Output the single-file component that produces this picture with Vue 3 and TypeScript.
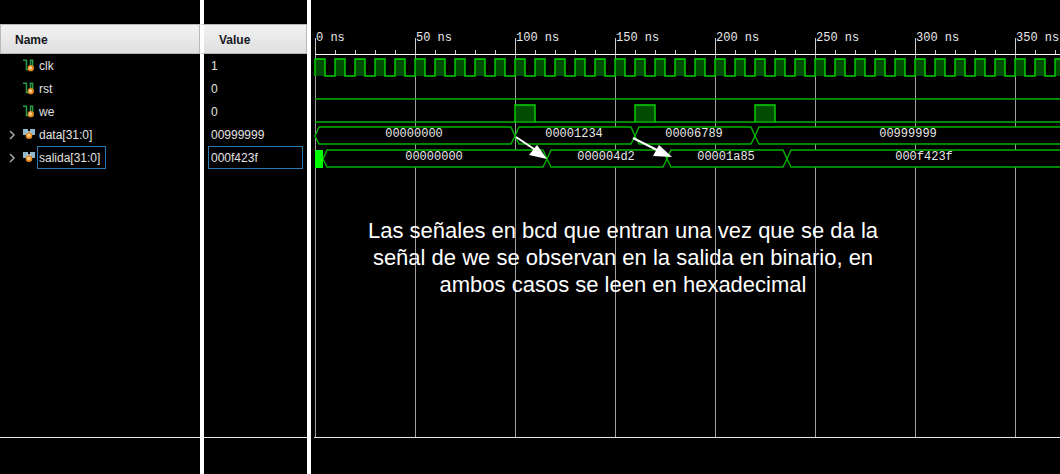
<script setup lang="ts">
import { computed, onBeforeUnmount, onMounted, ref } from 'vue'

interface Signal {
  name: string
  value: string
  bus: boolean
  selected?: boolean
}

interface Change {
  at: number
  text: string
}

const signals: Signal[] = [
  { name: 'clk', value: '1', bus: false },
  { name: 'rst', value: '0', bus: false },
  { name: 'we', value: '0', bus: false },
  { name: 'data[31:0]', value: '00999999', bus: true },
  { name: 'salida[31:0]', value: '000f423f', bus: true, selected: true },
]

// Horizontal positions are measured in pixels from the time origin, two per nanosecond.
const scale = 2
const origin = 4

const pane = ref<HTMLElement | null>(null)
const span = ref(745)
let observer: ResizeObserver | undefined

function measure(): void {
  if (pane.value) span.value = pane.value.clientWidth - origin
}

onMounted(() => {
  measure()
  observer = new ResizeObserver(measure)
  if (pane.value) observer.observe(pane.value)
})
onBeforeUnmount(() => observer?.disconnect())

function steps(ns: number): number[] {
  return Array.from({ length: Math.ceil(span.value / (ns * scale)) }, (_, i) => i * ns)
}

const majors = computed(() => steps(50))
const minors = computed(() => steps(10).filter((t) => t % 50 !== 0))
const clocks = computed(() => steps(10))
const pulses = [100, 160, 220]

const clockPath = computed(
  () => 'M0 76' + clocks.value.map((t) => `H${t * scale}V59H${t * scale + 10}V76`).join('') + `H${span.value}`,
)

const buses: { top: number; changes: Change[] }[] = [
  {
    top: 127,
    changes: [
      { at: 0, text: '00000000' },
      { at: 200, text: '00001234' },
      { at: 320, text: '00006789' },
      { at: 440, text: '00999999' },
    ],
  },
  {
    top: 150,
    changes: [
      { at: 8, text: '00000000' },
      { at: 232, text: '000004d2' },
      { at: 352, text: '00001a85' },
      { at: 472, text: '000f423f' },
    ],
  },
]

const traces = computed(() =>
  buses.map(({ top, changes }) => ({
    top,
    segments: changes.map((c, i) => {
      const next = changes[i + 1]
      const end = next ? next.at : span.value + 4
      const close = next
        ? `H${end - 4}L${end} ${top + 9}L${end - 4} ${top + 17}`
        : `H${end + 5}V${top + 17}`
      return {
        text: c.text,
        middle: Math.floor((c.at + end) / 2) - 1,
        d: `M${c.at} ${top + 9}L${c.at + 4} ${top}${close}H${c.at + 4}Z`,
      }
    }),
  })),
)
</script>

<template>
  <main class="viewer">
    <section class="signals">
      <table>
        <thead>
          <tr>
            <th class="name">Name</th>
            <th class="value">Value</th>
          </tr>
        </thead>
        <tbody>
          <tr v-for="s in signals" :key="s.name">
            <td class="name">
              <div class="entry">
                <button v-if="s.bus" type="button" class="expand" :aria-label="`Expand ${s.name}`">
                  <svg width="7" height="10" viewBox="0 0 7 10"><path d="M1 1L5 5L1 9" fill="none" stroke="#a8a8a8" stroke-width="1.5" /></svg>
                </button>
                <span v-else class="expand"></span>
                <svg v-if="s.bus" class="icon" width="12" height="13" viewBox="0 0 12 13">
                  <path d="M0 1H5V7H0ZM7 1H12V7H7Z" fill="#8fb8cc" />
                  <path d="M4 4H8" stroke="#c4d8e2" stroke-width="1.5" />
                  <circle cx="6" cy="7.8" r="3.3" fill="#e58a1f" />
                  <circle cx="5.8" cy="7.4" r="1.7" fill="#ffcf92" />
                </svg>
                <svg v-else class="icon" width="12" height="13" viewBox="0 0 12 13">
                  <path d="M0 1.2H3.5V10.5H7.5V1.2H9.6V8" fill="none" stroke="#2a9c48" stroke-width="1.5" />
                  <circle cx="7.8" cy="9.2" r="3.1" fill="#e58a1f" />
                  <circle cx="7.5" cy="8.9" r="1.6" fill="#ffcf92" />
                </svg>
                <span class="label" :class="{ selected: s.selected }">{{ s.name }}</span>
              </div>
            </td>
            <td class="value">
              <div class="reading" :class="{ selected: s.selected }">{{ s.value }}</div>
            </td>
          </tr>
        </tbody>
      </table>
    </section>

    <section ref="pane" class="wave">
      <svg class="plot" width="100%" height="100%" role="img" aria-label="Waveform">
        <svg :x="origin" y="0" width="100%" height="100%" overflow="visible">
          <g class="grid">
            <rect v-for="t in majors" :key="t" :x="t * scale" y="38" width="1" height="100%" />
          </g>
          <g class="ticks">
            <rect v-for="t in minors" :key="t" :x="t * scale" y="50" width="1" height="4" />
            <rect v-for="t in majors" :key="t" :x="t * scale" y="38" width="1" height="16" />
            <rect class="axis" x="0" y="54" width="100%" height="1" />
          </g>
          <g class="time">
            <text v-for="t in majors" :key="t" :x="t * scale + 1" y="41">{{ t }} ns</text>
          </g>

          <g class="pulse">
            <rect v-for="t in clocks" :key="t" :x="t * scale" y="59" width="10" height="17" />
            <rect v-for="t in pulses" :key="t" :x="t * scale" y="105" width="20" height="17" />
          </g>
          <path class="trace" :d="clockPath" />
          <path class="trace low" :d="`M0 99H${span}M0 122H${span}`" />
          <path v-for="t in pulses" :key="t" class="trace" :d="`M${t * scale} 122V105H${t * scale + 20}V122`" />

          <g v-for="b in traces" :key="b.top">
            <g v-for="s in b.segments" :key="s.text">
              <path class="bus" :d="s.d" />
              <text class="bits" :x="s.middle" :y="b.top + 10">{{ s.text }}</text>
            </g>
          </g>
          <rect x="0" y="150" width="8" height="18" fill="#00ff00" />

          <g class="arrows">
            <path d="M201 137L222 151" />
            <path d="M318 138L342 150" />
            <polygon points="232,159 214,155 222,145" />
            <polygon points="357,157 338,156 344,145" />
          </g>
        </svg>
      </svg>
      <p class="note">
        Las señales en bcd que entran una vez que se da la<br />
        señal de we se observan en la salida en binario, en<br />
        ambos casos se leen en hexadecimal
      </p>
    </section>
  </main>
</template>

<style>
body {
  margin: 0;
  background: #000;
}
</style>

<style scoped>
.viewer {
  display: grid;
  grid-template-columns: 311px 1fr;
  min-height: 100vh;
  box-sizing: border-box;
  background: #000;
  color: #e2e2e2;
  font: 12px/16px "Liberation Sans", Arial, sans-serif;
}

.signals {
  padding-top: 24px;
  background:
    linear-gradient(#fff, #fff) 200px 0 / 4px 100% no-repeat,
    linear-gradient(#fff, #fff) 307px 0 / 4px 100% no-repeat,
    linear-gradient(#e8e8e8, #e8e8e8) 0 calc(100% - 36px) / 100% 1px no-repeat;
}

table {
  width: 307px;
  table-layout: fixed;
  border-collapse: separate;
  border-spacing: 0;
}

th {
  box-sizing: border-box;
  height: 30px;
  padding: 2px 0 0 14px;
  border: 1px solid #b8b8b8;
  background: linear-gradient(#f2f2f2, #dfdfe1);
  color: #16161c;
  font-weight: bold;
  text-align: left;
}

th.name {
  width: 200px;
}

th.value {
  width: 107px;
  padding-left: 15px;
  border-left: 4px solid #fff;
}

td {
  height: 23px;
  padding: 0;
}

td.value {
  padding: 0 4px 0 8px;
}

.entry {
  display: flex;
  align-items: center;
  height: 23px;
  padding-left: 9px;
}

.expand {
  display: flex;
  width: 14px;
  padding: 0;
  border: 0;
  background: none;
}

.icon {
  margin-right: 2px;
}

.label,
.reading {
  box-sizing: border-box;
  height: 23px;
  padding: 3px 2px;
  border: 1px solid transparent;
}

.label {
  padding: 3px 5px 3px 1px;
}

.label.selected,
.reading.selected {
  border-color: #2d7ab0;
}

.wave {
  position: relative;
  overflow: hidden;
  margin-bottom: 36px;
  border-bottom: 1px solid #e8e8e8;
  clip-path: inset(0 0 0 3px);
}

.plot {
  position: absolute;
  inset: 0;
}

.grid rect {
  fill: #a0a0a0;
}

.ticks rect {
  fill: #c8c8c8;
}

.ticks .axis {
  fill: #fff;
}

.time text,
.bits {
  fill: #e8e8e8;
  font: 12px "Liberation Mono", "Courier New", monospace;
}

.bits {
  text-anchor: middle;
}

.pulse rect {
  fill: #004c00;
}

.trace {
  fill: none;
  stroke: #00d600;
  stroke-width: 1.4;
}

.trace.low {
  stroke: #00b400;
}

.bus {
  fill: #000;
  stroke: #00b400;
  stroke-width: 1.4;
}

.arrows path {
  stroke: #fff;
  stroke-width: 2;
}

.arrows polygon {
  fill: #fff;
}

.note {
  position: absolute;
  top: 217px;
  left: 52px;
  width: 520px;
  margin: 0;
  color: #fff;
  font-size: 22px;
  line-height: 27px;
  text-align: center;
  white-space: nowrap;
}
</style>
